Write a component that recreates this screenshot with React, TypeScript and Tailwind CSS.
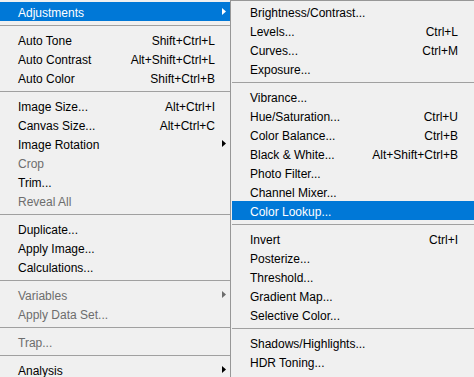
type Item =
  | { sep: true }
  | {
      sep?: false;
      label: string;
      shortcut?: string;
      arrow?: boolean;
      disabled?: boolean;
      active?: boolean;
    };

const imageMenu: Item[] = [
  { label: "Adjustments", arrow: true, active: true },
  { sep: true },
  { label: "Auto Tone", shortcut: "Shift+Ctrl+L" },
  { label: "Auto Contrast", shortcut: "Alt+Shift+Ctrl+L" },
  { label: "Auto Color", shortcut: "Shift+Ctrl+B" },
  { sep: true },
  { label: "Image Size...", shortcut: "Alt+Ctrl+I" },
  { label: "Canvas Size...", shortcut: "Alt+Ctrl+C" },
  { label: "Image Rotation", arrow: true },
  { label: "Crop", disabled: true },
  { label: "Trim..." },
  { label: "Reveal All", disabled: true },
  { sep: true },
  { label: "Duplicate..." },
  { label: "Apply Image..." },
  { label: "Calculations..." },
  { sep: true },
  { label: "Variables", arrow: true, disabled: true },
  { label: "Apply Data Set...", disabled: true },
  { sep: true },
  { label: "Trap...", disabled: true },
  { sep: true },
  { label: "Analysis", arrow: true },
];

const adjustMenu: Item[] = [
  { label: "Brightness/Contrast..." },
  { label: "Levels...", shortcut: "Ctrl+L" },
  { label: "Curves...", shortcut: "Ctrl+M" },
  { label: "Exposure..." },
  { sep: true },
  { label: "Vibrance..." },
  { label: "Hue/Saturation...", shortcut: "Ctrl+U" },
  { label: "Color Balance...", shortcut: "Ctrl+B" },
  { label: "Black & White...", shortcut: "Alt+Shift+Ctrl+B" },
  { label: "Photo Filter..." },
  { label: "Channel Mixer..." },
  { label: "Color Lookup...", active: true },
  { sep: true },
  { label: "Invert", shortcut: "Ctrl+I" },
  { label: "Posterize..." },
  { label: "Threshold..." },
  { label: "Gradient Map..." },
  { label: "Selective Color..." },
  { sep: true },
  { label: "Shadows/Highlights..." },
  { label: "HDR Toning..." },
];

const Arrow = ({ color }: { color: string }) => (
  <svg width="4" height="7" viewBox="0 0 4 7" className="block">
    <path d="M0 0 L4 3.5 L0 7 Z" fill={color} />
  </svg>
);

const MenuList = ({ items, withArrows }: { items: Item[]; withArrows: boolean }) => (
  <div className="flex flex-col">
    {items.map((it, i) => {
      if (it.sep) {
        return (
          <div key={i} className="h-[9px] flex items-center">
            <div className="h-px w-full bg-[#a0a0a0]" />
          </div>
        );
      }
      const text = it.active ? "text-white" : it.disabled ? "text-[#6d6d6d]" : "text-black";
      return (
        <div
          key={i}
          className={`h-[19px] flex items-center pl-[18px] ${withArrows ? "" : "pr-[16px]"} ${
            it.active ? "bg-[#0078d7]" : ""
          } ${text}`}
        >
          <span className="flex-1 whitespace-nowrap pt-[2px]">{it.label}</span>
          {it.shortcut && <span className="whitespace-nowrap pt-[2px]">{it.shortcut}</span>}
          {withArrows && (
            <span className="w-[15px] flex items-center justify-end pr-[4px]">
              {it.arrow && (
                <Arrow color={it.active ? "#ffffff" : it.disabled ? "#6d6d6d" : "#000000"} />
              )}
            </span>
          )}
        </div>
      );
    })}
  </div>
);

export default function App() {
  return (
    <div
      className="w-[474px] h-[377px] overflow-hidden bg-[#f0f0f0] flex text-[12px] leading-none"
      style={{ fontFamily: '"Liberation Sans", Arial, sans-serif' }}
    >
      <div className="w-[230px] shrink-0 pt-[2px]">
        <MenuList items={imageMenu} withArrows />
      </div>
      <div className="flex-1 border-l border-t border-[#979797] pt-px pl-px">
        <MenuList items={adjustMenu} withArrows={false} />
      </div>
    </div>
  );
}
